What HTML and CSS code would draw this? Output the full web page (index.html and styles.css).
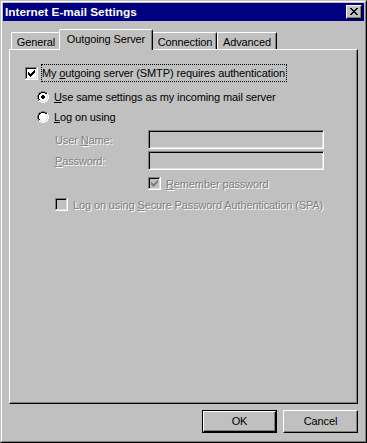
FILE: index.html
```html
<!DOCTYPE html>
<html>
<head>
<meta charset="utf-8">
<link rel="stylesheet" href="styles.css">
</head>
<body>
<svg class="defs" width="0" height="0" aria-hidden="true">
  <defs>
    <g id="cb-frame">
      <rect width="13" height="13" fill="#fff"/>
      <rect width="12" height="12" fill="#808080"/>
      <rect x="1" y="1" width="11" height="11" fill="#dfdfdf"/>
      <rect x="1" y="1" width="10" height="10" fill="#000"/>
    </g>
    <g id="check">
      <rect x="9" y="3" width="1" height="1"/>
      <rect x="8" y="4" width="2" height="1"/>
      <rect x="3" y="5" width="1" height="1"/>
      <rect x="7" y="5" width="3" height="1"/>
      <rect x="3" y="6" width="2" height="1"/>
      <rect x="6" y="6" width="3" height="1"/>
      <rect x="3" y="7" width="5" height="1"/>
      <rect x="4" y="8" width="3" height="1"/>
      <rect x="5" y="9" width="1" height="1"/>
    </g>
    <g id="radio">
      <g fill="#808080">
        <rect x="4" y="0" width="4" height="1"/>
        <rect x="2" y="1" width="2" height="1"/>
        <rect x="8" y="1" width="2" height="1"/>
        <rect x="1" y="2" width="1" height="2"/>
        <rect x="0" y="4" width="1" height="4"/>
        <rect x="1" y="8" width="1" height="2"/>
      </g>
      <g fill="#000">
        <rect x="4" y="1" width="4" height="1"/>
        <rect x="2" y="2" width="2" height="1"/>
        <rect x="8" y="2" width="2" height="1"/>
        <rect x="2" y="3" width="1" height="1"/>
        <rect x="1" y="4" width="1" height="4"/>
        <rect x="2" y="8" width="1" height="1"/>
      </g>
      <g fill="#fff">
        <rect x="10" y="2" width="1" height="2"/>
        <rect x="11" y="4" width="1" height="4"/>
        <rect x="10" y="8" width="1" height="2"/>
        <rect x="2" y="10" width="2" height="1"/>
        <rect x="8" y="10" width="2" height="1"/>
        <rect x="4" y="11" width="4" height="1"/>
        <rect x="4" y="2" width="4" height="1"/>
        <rect x="3" y="3" width="6" height="1"/>
        <rect x="2" y="4" width="8" height="4"/>
        <rect x="3" y="8" width="6" height="1"/>
        <rect x="4" y="9" width="4" height="1"/>
      </g>
      <g fill="#dfdfdf">
        <rect x="9" y="3" width="1" height="1"/>
        <rect x="10" y="4" width="1" height="4"/>
        <rect x="9" y="8" width="1" height="1"/>
        <rect x="2" y="9" width="2" height="1"/>
        <rect x="8" y="9" width="2" height="1"/>
        <rect x="4" y="10" width="4" height="1"/>
      </g>
    </g>
    <g id="dot">
      <rect x="5" y="4" width="2" height="1"/>
      <rect x="4" y="5" width="4" height="2"/>
      <rect x="5" y="7" width="2" height="1"/>
    </g>
  </defs>
</svg>

<div class="window">
  <div class="window-inner">
    <div class="titlebar">
      <span class="title">Internet E-mail Settings</span>
      <div class="close-btn">
        <svg width="8" height="7" viewBox="0 0 8 7" shape-rendering="crispEdges">
          <rect x="0" y="0" width="2" height="1"/><rect x="6" y="0" width="2" height="1"/>
          <rect x="1" y="1" width="2" height="1"/><rect x="5" y="1" width="2" height="1"/>
          <rect x="2" y="2" width="4" height="1"/>
          <rect x="3" y="3" width="2" height="1"/>
          <rect x="2" y="4" width="4" height="1"/>
          <rect x="1" y="5" width="2" height="1"/><rect x="5" y="5" width="2" height="1"/>
          <rect x="0" y="6" width="2" height="1"/><rect x="6" y="6" width="2" height="1"/>
        </svg>
      </div>
    </div>

    <div class="body">
      <div class="tabs">
        <div class="tab tab-general">General</div>
        <div class="tab tab-outgoing selected">Outgoing Server</div>
        <div class="tab tab-connection">Connection</div>
        <div class="tab tab-advanced">Advanced</div>
      </div>

      <div class="panel">
        <div class="row row-auth">
          <svg class="cb" width="13" height="13" viewBox="0 0 13 13" shape-rendering="crispEdges">
            <use href="#cb-frame"/>
            <rect x="2" y="2" width="9" height="9" fill="#fff"/>
            <use href="#check" fill="#000"/>
          </svg>
          <span class="focus-label">My <u>o</u>utgoing server (SMTP) requires authentication</span>
        </div>

        <div class="row row-radio row-same">
          <svg class="rb" width="12" height="12" viewBox="0 0 12 12" shape-rendering="crispEdges">
            <use href="#radio"/>
            <use href="#dot" fill="#000"/>
          </svg>
          <span class="label"><u>U</u>se same settings as my incoming mail server</span>
        </div>

        <div class="row row-radio row-logon">
          <svg class="rb" width="12" height="12" viewBox="0 0 12 12" shape-rendering="crispEdges">
            <use href="#radio"/>
          </svg>
          <span class="label"><u>L</u>og on using</span>
        </div>

        <div class="field field-user">
          <span class="field-label disabled">User <u>N</u>ame:</span>
          <div class="textbox"></div>
        </div>

        <div class="field field-pass">
          <span class="field-label disabled"><u>P</u>assword:</span>
          <div class="textbox"></div>
        </div>

        <div class="row row-check row-remember">
          <svg class="cb" width="13" height="13" viewBox="0 0 13 13" shape-rendering="crispEdges">
            <use href="#cb-frame"/>
            <rect x="2" y="2" width="9" height="9" fill="#c0c0c0"/>
            <use href="#check" fill="#808080"/>
          </svg>
          <span class="label disabled"><u>R</u>emember password</span>
        </div>

        <div class="row row-check row-spa">
          <svg class="cb" width="13" height="13" viewBox="0 0 13 13" shape-rendering="crispEdges">
            <use href="#cb-frame"/>
            <rect x="2" y="2" width="9" height="9" fill="#c0c0c0"/>
          </svg>
          <span class="label disabled">Log on using <u>S</u>ecure Password Authentication (SPA)</span>
        </div>
      </div>

      <div class="buttons">
        <div class="btn btn-default"><div class="btn-face">OK</div></div>
        <div class="btn"><div class="btn-face">Cancel</div></div>
      </div>
    </div>
  </div>
</div>
</body>
</html>
```

FILE: styles.css
```css
* {
  box-sizing: border-box;
}

html, body {
  margin: 0;
  padding: 0;
  background: #c0c0c0;
}

body {
  font-family: "Liberation Sans", Arial, sans-serif;
  font-size: 11px;
  letter-spacing: -0.12px;
  color: #000;
}

.defs {
  position: absolute;
  width: 0;
  height: 0;
  overflow: hidden;
}

.window {
  width: 367px;
  height: 443px;
  border: 1px solid;
  border-color: #c0c0c0 #000 #000 #c0c0c0;
  background: #c0c0c0;
}

.window-inner {
  height: 100%;
  border: 1px solid;
  border-color: #fff #808080 #808080 #fff;
  padding: 1px;
  display: flex;
  flex-direction: column;
}

.titlebar {
  height: 18px;
  background: #000080;
  display: flex;
  align-items: center;
  justify-content: space-between;
  padding: 0 2px 0 2px;
}

.title {
  color: #fff;
  font-weight: bold;
  font-size: 11.8px;
  letter-spacing: 0;
}

.close-btn {
  width: 16px;
  height: 14px;
  background: #c0c0c0;
  border: 1px solid;
  border-color: #fff #000 #000 #fff;
  box-shadow: inset -1px -1px 0 #808080;
  display: flex;
  align-items: center;
  justify-content: center;
  padding: 0 1px 1px 0;
}

.close-btn svg {
  display: block;
}

.body {
  flex: 1;
  display: flex;
  flex-direction: column;
  padding: 8px 6px 7px 6px;
}

.tabs {
  display: flex;
  align-items: flex-end;
  height: 20px;
  margin-left: 2px;
}

.tab {
  height: 17px;
  border-top: 1px solid #fff;
  border-left: 1px solid #fff;
  border-right: 1px solid #000;
  border-top-left-radius: 2px;
  border-top-right-radius: 2px;
  box-shadow: inset -1px 0 0 #808080;
  background: #c0c0c0;
  display: flex;
  align-items: center;
  justify-content: center;
  padding-top: 1px;
  white-space: nowrap;
}

.tab-general { width: 50px; }
.tab-outgoing { width: 94px; }
.tab-connection { width: 66px; padding-left: 2px; }
.tab-advanced { width: 60px; }

.tab.selected {
  height: 21px;
  margin: 0 -2px -1px -2px;
  position: relative;
  z-index: 2;
  padding-top: 0;
  padding-bottom: 3px;
}

.panel {
  height: 355px;
  border: 1px solid;
  border-color: #fff #000 #000 #fff;
  box-shadow: inset -1px -1px 0 #808080;
  padding: 14px 0 0 15px;
  display: flex;
  flex-direction: column;
  align-items: flex-start;
}

.row {
  display: flex;
  align-items: center;
}

.row svg {
  display: block;
  flex: none;
}

.row-auth {
  height: 18px;
}

.focus-label {
  margin-left: 3px;
  padding: 1px 2px 1px 1px;
  outline: 1px dotted #000;
  outline-offset: -1px;
  height: 18px;
  line-height: 16px;
}

.row-radio {
  height: 16px;
  margin-left: 12px;
}

.row-same { margin-top: 7px; }
.row-logon { margin-top: 4px; }

.row-radio .label {
  margin-left: 5px;
}

.field {
  display: flex;
  align-items: center;
  margin-left: 30px;
}

.field-user { margin-top: 5px; }
.field-pass { margin-top: 2px; }

.field-label {
  width: 93px;
}

.textbox {
  width: 176px;
  height: 19px;
  background: #c0c0c0;
  border: 1px solid;
  border-color: #808080 #fff #fff #808080;
  box-shadow: inset 1px 1px 0 #000, inset -1px -1px 0 #dfdfdf;
}

.row-check {
  height: 15px;
}

.row-check .label {
  margin-left: 5px;
}

.row-remember {
  margin-top: 6px;
  margin-left: 123px;
}

.row-spa {
  margin-top: 6px;
  margin-left: 30px;
}

.disabled {
  color: #808080;
  text-shadow: 1px 1px 0 #fff;
}

u {
  text-decoration: underline;
  text-underline-offset: 1px;
}

.buttons {
  display: flex;
  justify-content: flex-end;
  gap: 6px;
  margin-top: 6px;
}

.btn {
  width: 75px;
  height: 23px;
  background: #c0c0c0;
  border: 1px solid;
  border-color: #fff #000 #000 #fff;
  box-shadow: inset -1px -1px 0 #808080;
}

.btn .btn-face {
  height: 100%;
  display: flex;
  align-items: center;
  justify-content: center;
  padding-bottom: 1px;
}

.btn-default {
  border: 1px solid #000;
  box-shadow: none;
}

.btn-default .btn-face {
  border: 1px solid;
  border-color: #fff #000 #000 #fff;
  box-shadow: inset -1px -1px 0 #808080;
}
```
